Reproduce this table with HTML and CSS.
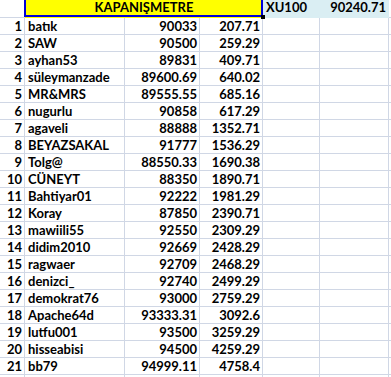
FILE: index.html
```html
<!DOCTYPE html>
<html lang="tr">
<head>
    <meta charset="UTF-8">
    <title>Kapanışmetre</title>
    <link rel="stylesheet" href="styles.css">
</head>
<body>
    <div class="sheet">
        <div class="row head">
            <div class="cell"></div>
            <div class="cell title">KAPANIŞMETRE</div>
            <div class="cell index">XU100</div>
            <div class="cell index right">90240.71</div>
            <div class="cell"></div>
        </div>

        <div class="row"><div class="cell right">1</div><div class="cell">batık</div><div class="cell right">90033</div><div class="cell right">207.71</div><div class="cell"></div><div class="cell"></div><div class="cell"></div></div>
        <div class="row"><div class="cell right">2</div><div class="cell">SAW</div><div class="cell right">90500</div><div class="cell right">259.29</div><div class="cell"></div><div class="cell"></div><div class="cell"></div></div>
        <div class="row"><div class="cell right">3</div><div class="cell">ayhan53</div><div class="cell right">89831</div><div class="cell right">409.71</div><div class="cell"></div><div class="cell"></div><div class="cell"></div></div>
        <div class="row"><div class="cell right">4</div><div class="cell">süleymanzade</div><div class="cell right">89600.69</div><div class="cell right">640.02</div><div class="cell"></div><div class="cell"></div><div class="cell"></div></div>
        <div class="row"><div class="cell right">5</div><div class="cell">MR&amp;MRS</div><div class="cell right">89555.55</div><div class="cell right">685.16</div><div class="cell"></div><div class="cell"></div><div class="cell"></div></div>
        <div class="row"><div class="cell right">6</div><div class="cell">nugurlu</div><div class="cell right">90858</div><div class="cell right">617.29</div><div class="cell"></div><div class="cell"></div><div class="cell"></div></div>
        <div class="row"><div class="cell right">7</div><div class="cell">agaveli</div><div class="cell right">88888</div><div class="cell right">1352.71</div><div class="cell"></div><div class="cell"></div><div class="cell"></div></div>
        <div class="row"><div class="cell right">8</div><div class="cell">BEYAZSAKAL</div><div class="cell right">91777</div><div class="cell right">1536.29</div><div class="cell"></div><div class="cell"></div><div class="cell"></div></div>
        <div class="row"><div class="cell right">9</div><div class="cell">Tolg@</div><div class="cell right">88550.33</div><div class="cell right">1690.38</div><div class="cell"></div><div class="cell"></div><div class="cell"></div></div>
        <div class="row"><div class="cell right">10</div><div class="cell">CÜNEYT</div><div class="cell right">88350</div><div class="cell right">1890.71</div><div class="cell"></div><div class="cell"></div><div class="cell"></div></div>
        <div class="row"><div class="cell right">11</div><div class="cell">Bahtiyar01</div><div class="cell right">92222</div><div class="cell right">1981.29</div><div class="cell"></div><div class="cell"></div><div class="cell"></div></div>
        <div class="row"><div class="cell right">12</div><div class="cell">Koray</div><div class="cell right">87850</div><div class="cell right">2390.71</div><div class="cell"></div><div class="cell"></div><div class="cell"></div></div>
        <div class="row"><div class="cell right">13</div><div class="cell">mawiili55</div><div class="cell right">92550</div><div class="cell right">2309.29</div><div class="cell"></div><div class="cell"></div><div class="cell"></div></div>
        <div class="row"><div class="cell right">14</div><div class="cell">didim2010</div><div class="cell right">92669</div><div class="cell right">2428.29</div><div class="cell"></div><div class="cell"></div><div class="cell"></div></div>
        <div class="row"><div class="cell right">15</div><div class="cell">ragwaer</div><div class="cell right">92709</div><div class="cell right">2468.29</div><div class="cell"></div><div class="cell"></div><div class="cell"></div></div>
        <div class="row"><div class="cell right">16</div><div class="cell">denizci_</div><div class="cell right">92740</div><div class="cell right">2499.29</div><div class="cell"></div><div class="cell"></div><div class="cell"></div></div>
        <div class="row"><div class="cell right">17</div><div class="cell">demokrat76</div><div class="cell right">93000</div><div class="cell right">2759.29</div><div class="cell"></div><div class="cell"></div><div class="cell"></div></div>
        <div class="row"><div class="cell right">18</div><div class="cell">Apache64d</div><div class="cell right">93333.31</div><div class="cell right">3092.6</div><div class="cell"></div><div class="cell"></div><div class="cell"></div></div>
        <div class="row"><div class="cell right">19</div><div class="cell">lutfu001</div><div class="cell right">93500</div><div class="cell right">3259.29</div><div class="cell"></div><div class="cell"></div><div class="cell"></div></div>
        <div class="row"><div class="cell right">20</div><div class="cell">hisseabisi</div><div class="cell right">94500</div><div class="cell right">4259.29</div><div class="cell"></div><div class="cell"></div><div class="cell"></div></div>
        <div class="row"><div class="cell right">21</div><div class="cell">bb79</div><div class="cell right">94999.11</div><div class="cell right">4758.4</div><div class="cell"></div><div class="cell"></div><div class="cell"></div></div>
        <div class="row"><div class="cell"></div><div class="cell"></div><div class="cell"></div><div class="cell"></div><div class="cell"></div><div class="cell"></div><div class="cell"></div></div>
    </div>
</body>
</html>
```

FILE: styles.css
```css
body {
    margin: 0;
    background-color: #fff;
    font-family: Lato, "Open Sans", sans-serif;
    font-weight: bold;
    font-size: 13px;
    color: #000;
    overflow: hidden;
}

.sheet {
    width: 391px;
    overflow: hidden;
}

.row {
    display: grid;
    grid-template-columns: 25px 100px 75px 63px 57px 69px 60px;
    height: 17px;
}

.row.head {
    height: 18px;
}

.cell {
    box-sizing: border-box;
    border-right: 1px solid #d0d7e5;
    border-bottom: 1px solid #d0d7e5;
    display: flex;
    align-items: flex-end;
    padding: 0 2px 0 3px;
    line-height: 15px;
    white-space: nowrap;
    overflow: hidden;
}

.cell.right {
    justify-content: flex-end;
    padding: 0 2px 0 0;
}

.cell.title {
    grid-column: span 3;
    position: relative;
    overflow: visible;
    justify-content: center;
    padding-bottom: 2px;
    background-color: #ffff00;
    border-color: #ffff00;
}

/* selection border + fill handle */
.cell.title::before {
    content: "";
    position: absolute;
    left: -1px;
    right: -1px;
    top: -3px;
    bottom: 0;
    border: 2px solid #0000d8;
}

.cell.title::after {
    content: "";
    position: absolute;
    right: -3px;
    bottom: -2px;
    width: 4px;
    height: 4px;
    background-color: #000;
    z-index: 2;
}

.cell.index {
    background-color: #daeef3;
    border-color: #daeef3;
    padding-bottom: 2px;
}
```
